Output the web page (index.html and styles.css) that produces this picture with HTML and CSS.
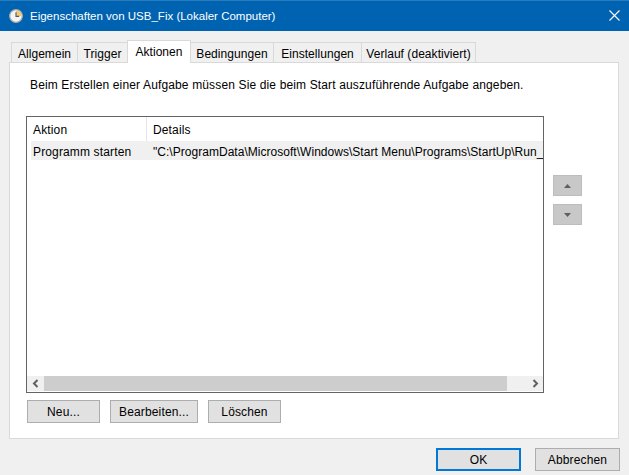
FILE: index.html
```html
<!DOCTYPE html>
<html>
<head>
    <title>Eigenschaften von USB_Fix</title>
    <link rel="stylesheet" href="styles.css">
</head>
<body>
    <div class="window">
        <div class="titlebar">
            <svg class="title-icon" width="14" height="14" viewBox="0 0 14 14">
                <circle cx="7" cy="7" r="6.3" fill="#f4f4f0" stroke="#a9acae" stroke-width="1.2"/>
                <path d="M7 7V1.4A5.6 5.6 0 0 1 12.6 7Z" fill="#f2c777"/>
                <path d="M7 3.2V7.4H10.2" fill="none" stroke="#55595c" stroke-width="1.1"/>
            </svg>
            <span class="title-text">Eigenschaften von USB_Fix (Lokaler Computer)</span>
            <svg class="close-icon" width="11" height="11" viewBox="0 0 11 11">
                <path d="M0.5 0.5L10.5 10.5M10.5 0.5L0.5 10.5" stroke="#fff" stroke-width="1.1" fill="none"/>
            </svg>
        </div>
        <div class="tabs">
            <div class="tab tab-allgemein">Allgemein</div>
            <div class="tab tab-trigger">Trigger</div>
            <div class="tab tab-active">Aktionen</div>
            <div class="tab tab-bedingungen">Bedingungen</div>
            <div class="tab tab-einstellungen">Einstellungen</div>
            <div class="tab tab-verlauf">Verlauf (deaktiviert)</div>
        </div>
        <div class="panel">
            <p class="intro">Beim Erstellen einer Aufgabe müssen Sie die beim Start auszuführende Aufgabe angeben.</p>
            <div class="list-row">
                <div class="list-box">
                    <div class="list-head">
                        <div class="col-action">Aktion</div>
                        <div class="col-details">Details</div>
                    </div>
                    <div class="list-item">
                        <div class="item-action">Programm starten</div>
                        <div class="item-details">"C:\ProgramData\Microsoft\Windows\Start Menu\Programs\StartUp\Run_</div>
                    </div>
                    <div class="list-space"></div>
                    <div class="hscroll">
                        <div class="scroll-btn">
                            <svg width="8" height="9" viewBox="0 0 8 9"><path d="M5.5 1L2 4.5L5.5 8" fill="none" stroke="#606060" stroke-width="2"/></svg>
                        </div>
                        <div class="scroll-thumb"></div>
                        <div class="scroll-track">
                            <svg width="8" height="9" viewBox="0 0 8 9"><path d="M2.5 1L6 4.5L2.5 8" fill="none" stroke="#606060" stroke-width="2"/></svg>
                        </div>
                    </div>
                </div>
                <div class="side-buttons">
                    <div class="side-btn"><svg width="7" height="4" viewBox="0 0 7 4"><path d="M3.5 0L7 4H0Z" fill="#5f5f5f"/></svg></div>
                    <div class="side-btn"><svg width="7" height="4" viewBox="0 0 7 4"><path d="M0 0H7L3.5 4Z" fill="#5f5f5f"/></svg></div>
                </div>
            </div>
            <div class="list-actions">
                <div class="btn btn-small">Neu...</div>
                <div class="btn btn-edit">Bearbeiten...</div>
                <div class="btn btn-small">Löschen</div>
            </div>
        </div>
        <div class="footer">
            <div class="btn btn-dialog btn-default">OK</div>
            <div class="btn btn-dialog">Abbrechen</div>
        </div>
    </div>
</body>
</html>
```

FILE: styles.css
```css
* {
    box-sizing: border-box;
}

body {
    margin: 0;
    background: #f0f0f0;
    font-family: "Liberation Sans", Arial, sans-serif;
    font-size: 12px;
    letter-spacing: 0.14px;
    color: #000;
}

.window {
    width: 629px;
    height: 475px;
    overflow: hidden;
}

.titlebar {
    display: flex;
    align-items: center;
    height: 31px;
    padding: 0 9px 0 9px;
    background: #0063b1;
    border-top: 1px solid #2a7cbd;
    color: #fff;
}

.title-icon {
    flex: none;
}

.title-text {
    flex: 1;
    margin-left: 7px;
    font-size: 11.5px;
    letter-spacing: 0;
}

.close-icon {
    flex: none;
    margin-bottom: 2px;
}

/* tab strip */
.tabs {
    display: flex;
    align-items: flex-end;
    height: 22px;
    margin-top: 9px;
    padding-left: 11px;
    letter-spacing: 0.05px;
}

.tab {
    height: 20px;
    line-height: 23px;
    text-align: center;
    background: #f0f0f0;
    border: 1px solid #d9d9d9;
    border-bottom: none;
    margin-left: -1px;
}

.tab:first-child {
    margin-left: 0;
}

.tab-allgemein { width: 67px; }
.tab-trigger { width: 51px; }
.tab-bedingungen { width: 84px; }
.tab-einstellungen { width: 89px; }
.tab-verlauf { width: 115px; }

.tab-active {
    position: relative;
    z-index: 1;
    width: 64px;
    height: 23px;
    line-height: 23px;
    margin-bottom: -1px;
    background: #fff;
}

.panel {
    width: 610px;
    height: 377px;
    margin-left: 9px;
    padding: 0 16px;
    background: #fff;
    border: 1px solid #d9d9d9;
}

.intro {
    margin: 14px 0 24px 4px;
    height: 15px;
    line-height: 17px;
}

.list-row {
    display: flex;
}

.list-box {
    display: flex;
    flex-direction: column;
    width: 518px;
    height: 277px;
    border: 1px solid #646464;
    overflow: hidden;
}

.list-head {
    display: flex;
    flex: none;
    height: 24px;
    line-height: 26px;
}

.col-action {
    width: 120px;
    padding-left: 6px;
    border-right: 1px solid #e5e5e5;
}

.col-details {
    padding-left: 6px;
}

.list-item {
    display: flex;
    flex: none;
    height: 19px;
    line-height: 22px;
    margin-left: 4px;
    background: #f0f0f0;
    white-space: nowrap;
}

.item-action {
    flex: none;
    width: 116px;
    padding-left: 2px;
}

.item-details {
    padding-left: 6px;
    letter-spacing: 0.03px;
}

.list-space {
    flex: 1;
}

.hscroll {
    display: flex;
    flex: none;
    height: 15px;
    margin-bottom: 1px;
}

.scroll-btn {
    display: flex;
    align-items: center;
    justify-content: center;
    width: 17px;
    background: #f0f0f0;
}

.scroll-thumb {
    width: 463px;
    background: #cdcdcd;
}

.scroll-track {
    display: flex;
    flex: 1;
    align-items: center;
    justify-content: flex-end;
    padding-right: 4px;
    background: #f0f0f0;
}

.side-buttons {
    display: flex;
    flex-direction: column;
    gap: 8px;
    margin: 59px 0 0 9px;
}

.side-btn {
    display: flex;
    align-items: center;
    justify-content: center;
    width: 29px;
    height: 21px;
    background: #c8c8c8;
    border: 1px solid #bdbdbd;
}

/* buttons */
.btn {
    height: 23px;
    line-height: 23px;
    text-align: center;
    background: #e1e1e1;
    border: 1px solid #adadad;
}

.list-actions {
    display: flex;
    gap: 10px;
    margin: 7px 0 0 1px;
}

.btn-small {
    width: 73px;
}

.btn-edit {
    width: 88px;
}

.footer {
    display: flex;
    gap: 14px;
    margin: 9px 0 0 436px;
}

.btn-dialog {
    width: 85px;
}

.btn-default {
    line-height: 21px;
    border: 2px solid #0078d7;
}
```
